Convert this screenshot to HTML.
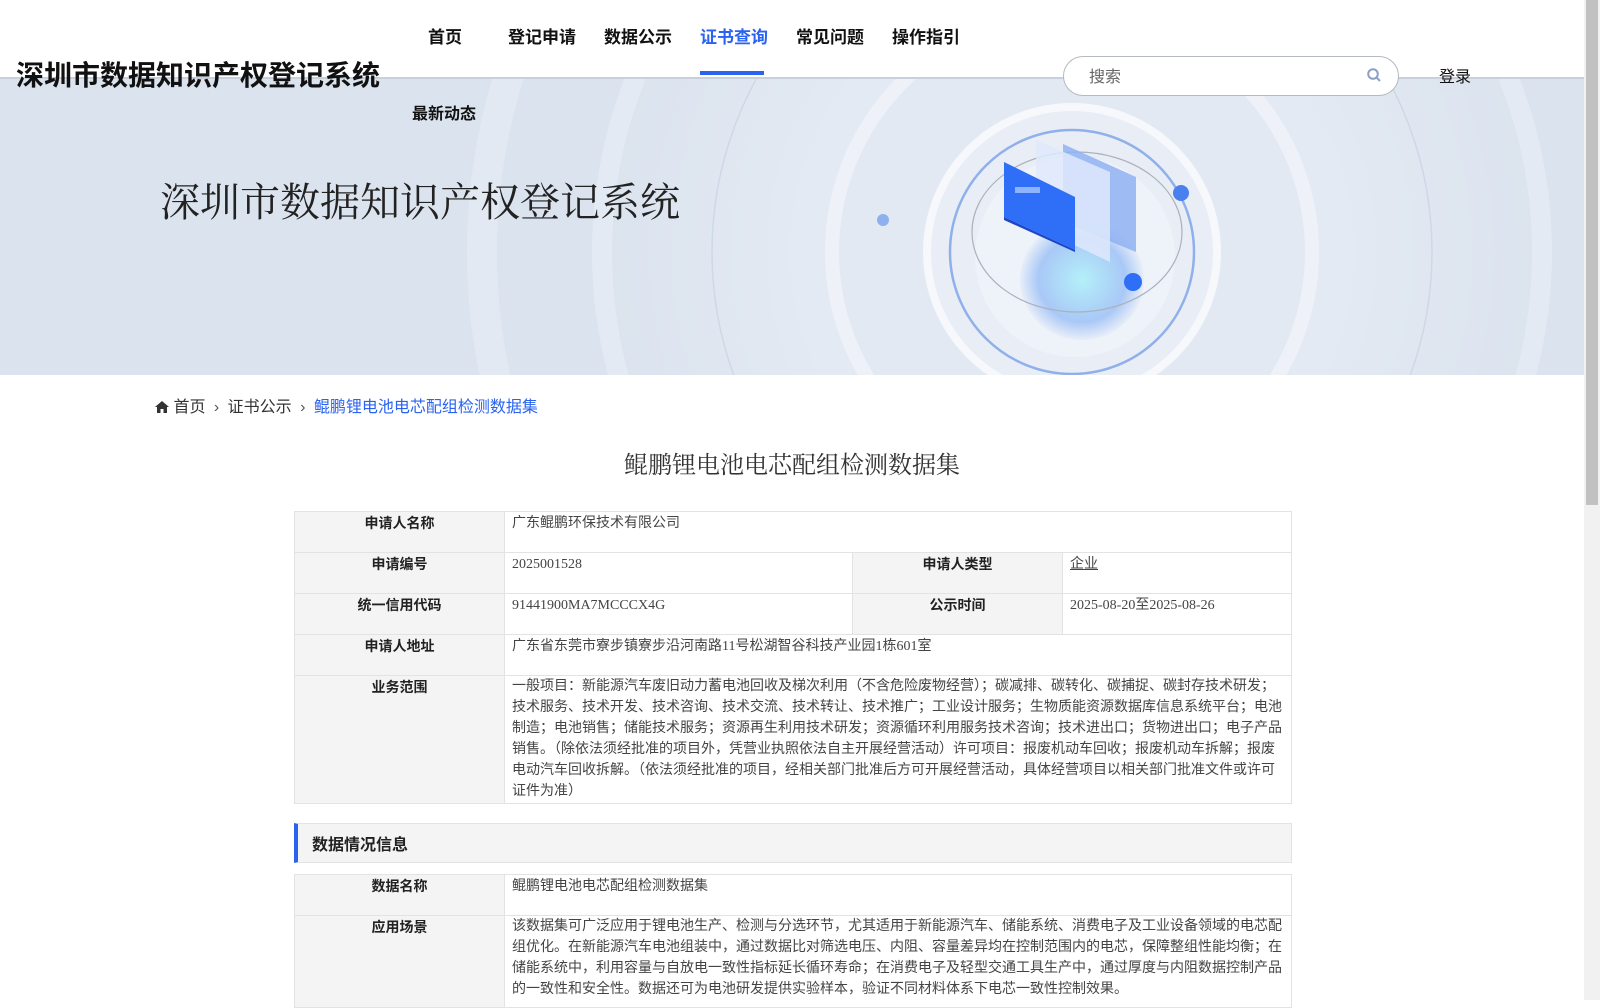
<!DOCTYPE html>
<html><head><meta charset="utf-8"><style>
*{margin:0;padding:0;box-sizing:border-box}
body{width:1600px;height:1000px;overflow:hidden;background:#fff;font-family:"Liberation Sans","Noto Sans CJK SC",sans-serif;color:#222;position:relative}
.abs{position:absolute}
.banner{left:0;top:77px;width:1584px;height:298px;background:#dbe3ee;border-top:2px solid #c7d0dc;overflow:hidden}
.nav{font-size:17px;font-weight:bold;top:23px;color:#111}
.scroll{right:0;top:0;width:16px;height:1000px;background:#f1f1f1}
.thumb{right:2px;top:0;width:12px;height:505px;background:#c1c1c1}
table{border-collapse:collapse;font-family:"Liberation Serif","Noto Sans CJK SC",serif;font-size:14px;color:#444}
td{border:1px solid #e3e3e3;vertical-align:top;padding:1px 7px 7px;line-height:21px}
td.l{background:#f4f4f4;font-weight:bold;text-align:center;color:#222;font-family:"Liberation Sans","Noto Sans CJK SC",sans-serif;width:210px}
</style></head><body>
<div class="abs banner">
<svg width="1584" height="298" viewBox="0 77 1584 298">
<defs>
<radialGradient id="g1" cx="0.5" cy="0.5" r="0.5"><stop offset="0" stop-color="#eef3fa"/><stop offset="1" stop-color="#dbe3ee"/></radialGradient>
<radialGradient id="g2" cx="0.5" cy="0.5" r="0.5"><stop offset="0" stop-color="#b4f0f8"/><stop offset="0.7" stop-color="#a9c8f7"/><stop offset="1" stop-color="#e8eef8"/></radialGradient>
</defs>
<circle cx="1072" cy="250" r="590" fill="none" stroke="#e3e9f2" stroke-width="30"/>
<circle cx="1072" cy="250" r="470" fill="url(#g1)" stroke="#e4eaf3" stroke-width="20"/>
<circle cx="1072" cy="250" r="360" fill="none" stroke="#cfd8e6" stroke-width="1.5"/>
<circle cx="1072" cy="250" r="240" fill="#e2e9f3" stroke="#eef2f8" stroke-width="14"/>
<circle cx="1072" cy="250" r="145" fill="#e9eef6" stroke="#f6f8fc" stroke-width="8"/>
<circle cx="1072" cy="250" r="122" fill="none" stroke="#8fb0ea" stroke-width="2.5"/>
<circle cx="1075" cy="255" r="100" fill="#eef2f9"/>
<ellipse cx="1082" cy="278" rx="62" ry="60" fill="url(#g2)"/>
<ellipse cx="1077" cy="230" rx="105" ry="80" fill="none" stroke="#aab2bd" stroke-width="1.2"/>
<polygon points="1063,142 1136,175 1136,250 1063,220" fill="#8fb2f3" opacity="0.85"/>
<polygon points="1036,138 1110,170 1110,260 1036,225" fill="#dfe9fb" opacity="0.85"/>
<polygon points="1004,160 1075,195 1075,248 1004,215" fill="#2f6ef7"/>
<polygon points="1004,215 1075,248 1075,250 1004,218" fill="#1c46c8"/>
<rect x="1015" y="185" width="25" height="6" fill="#8fb4ff"/>
<circle cx="883" cy="218" r="6" fill="#8fb0ef"/>
<circle cx="1181" cy="191" r="8" fill="#4a7ff0"/>
<circle cx="1133" cy="280" r="9" fill="#2f6ef7"/>
</svg>
<div class="abs" style="left:160px;top:92px;font-size:40px;color:#222;font-family:'Liberation Serif','Noto Serif CJK SC',serif;white-space:nowrap">深圳市数据知识产权登记系统</div>
</div>
<div class="abs" style="left:16px;top:54px;font-size:28px;font-weight:bold;color:#111">深圳市数据知识产权登记系统</div>
<div class="abs nav" style="left:428px">首页</div>
<div class="abs nav" style="left:508px">登记申请</div>
<div class="abs nav" style="left:604px">数据公示</div>
<div class="abs nav" style="left:700px;color:#2a63f0">证书查询</div>
<div class="abs" style="left:700px;top:71px;width:64px;height:4px;background:#2a63f0"></div>
<div class="abs nav" style="left:796px">常见问题</div>
<div class="abs nav" style="left:892px">操作指引</div>
<div class="abs" style="left:412px;top:100px;font-size:16px;font-weight:bold;color:#111">最新动态</div>
<div class="abs" style="left:1063px;top:56px;width:336px;height:40px;border:1px solid #b5b9c0;border-radius:20px;background:#fff"></div>
<div class="abs" style="left:1089px;top:63px;font-size:16px;color:#666">搜索</div>
<svg class="abs" style="left:1366px;top:67px" width="16" height="16" viewBox="0 0 16 16"><circle cx="7" cy="7" r="4.8" fill="none" stroke="#8da0c8" stroke-width="2"/><path d="M10.5 10.5 L14 14" stroke="#8da0c8" stroke-width="2"/></svg>
<div class="abs" style="left:1439px;top:63px;font-size:16px;color:#111">登录</div>

<div class="abs" style="left:155px;top:393px;font-size:16px;color:#333;white-space:nowrap">
<svg width="14" height="12" viewBox="0 0 14 12" style="vertical-align:-1px"><path d="M7 0 L14 6 L12 6 L12 12 L8.5 12 L8.5 8 L5.5 8 L5.5 12 L2 12 L2 6 L0 6Z" fill="#333"/></svg> 首页 <span style="color:#555;margin:0 4px">›</span> 证书公示 <span style="color:#555;margin:0 4px">›</span> <span style="color:#2a63f0">鲲鹏锂电池电芯配组检测数据集</span></div>
<div class="abs" style="left:0;width:1584px;top:445px;text-align:center;font-size:24px;color:#333;font-family:'Liberation Serif','Noto Serif CJK SC',serif">鲲鹏锂电池电芯配组检测数据集</div>

<table class="abs" style="left:294px;top:511px;width:998px">
<tr style="height:41px"><td class="l">申请人名称</td><td colspan="3">广东鲲鹏环保技术有限公司</td></tr>
<tr style="height:41px"><td class="l">申请编号</td><td style="width:348px">2025001528</td><td class="l">申请人类型</td><td><u>企业</u></td></tr>
<tr style="height:41px"><td class="l">统一信用代码</td><td>91441900MA7MCCCX4G</td><td class="l">公示时间</td><td>2025-08-20至2025-08-26</td></tr>
<tr style="height:41px"><td class="l">申请人地址</td><td colspan="3">广东省东莞市寮步镇寮步沿河南路11号松湖智谷科技产业园1栋601室</td></tr>
<tr><td class="l">业务范围</td><td colspan="3" style="padding-top:0;padding-bottom:1px">一般项目：新能源汽车废旧动力蓄电池回收及梯次利用（不含危险废物经营）；碳减排、碳转化、碳捕捉、碳封存技术研发；技术服务、技术开发、技术咨询、技术交流、技术转让、技术推广；工业设计服务；生物质能资源数据库信息系统平台；电池制造；电池销售；储能技术服务；资源再生利用技术研发；资源循环利用服务技术咨询；技术进出口；货物进出口；电子产品销售。（除依法须经批准的项目外，凭营业执照依法自主开展经营活动）许可项目：报废机动车回收；报废机动车拆解；报废电动汽车回收拆解。（依法须经批准的项目，经相关部门批准后方可开展经营活动，具体经营项目以相关部门批准文件或许可证件为准）</td></tr>
</table>
<div class="abs" style="left:294px;top:823px;width:998px;height:40px;background:#f4f4f4;border:1px solid #e3e3e3;border-left:4px solid #2a63f0;font-size:16px;font-weight:bold;padding:7px 0 0 14px;color:#222">数据情况信息</div>
<table class="abs" style="left:294px;top:874px;width:998px">
<tr style="height:41px"><td class="l">数据名称</td><td>鲲鹏锂电池电芯配组检测数据集</td></tr>
<tr><td class="l">应用场景</td><td style="padding-top:0">该数据集可广泛应用于锂电池生产、检测与分选环节，尤其适用于新能源汽车、储能系统、消费电子及工业设备领域的电芯配组优化。在新能源汽车电池组装中，通过数据比对筛选电压、内阻、容量差异均在控制范围内的电芯，保障整组性能均衡；在储能系统中，利用容量与自放电一致性指标延长循环寿命；在消费电子及轻型交通工具生产中，通过厚度与内阻数据控制产品的一致性和安全性。数据还可为电池研发提供实验样本，验证不同材料体系下电芯一致性控制效果。</td></tr>
</table>
<div class="abs scroll"></div><div class="abs thumb"></div>
</body></html>
